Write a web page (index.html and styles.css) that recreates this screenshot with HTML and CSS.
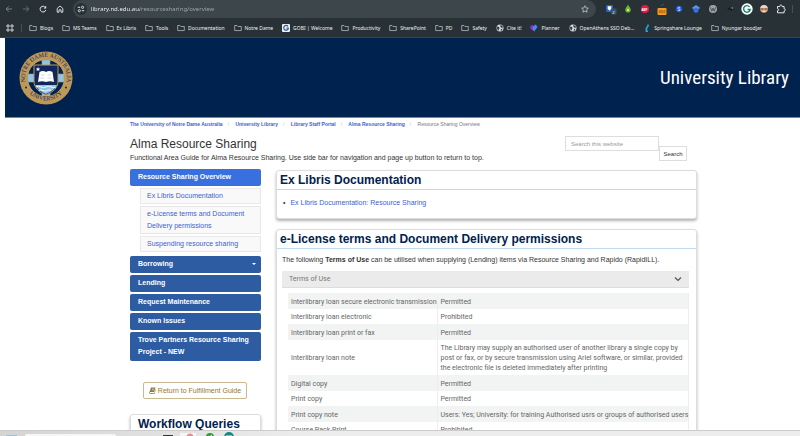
FILE: index.html
```html
<!DOCTYPE html>
<html lang="en">
<head>
    <meta charset="UTF-8">
    <meta name="viewport" content="width=device-width, initial-scale=1.0">
    <title>Resource Sharing Overview - Alma Resource Sharing</title>
    <link rel="stylesheet" href="styles.css">
</head>
<body>
    <!-- shared symbols -->
    <svg class="defs" width="0" height="0" aria-hidden="true">
        <symbol id="folder" viewBox="0 0 9 8"><path d="M.8 1.2h2.6l1 1.1h3.8v4.6H.8z" fill="none" stroke="#b4babd" stroke-width=".9" stroke-linejoin="round"/></symbol>
        <symbol id="globe" viewBox="0 0 8 8"><circle cx="4" cy="4" r="3.5" fill="#d5d9db"/><path d="M1 2.6l2 .4.7 1.3-1 .7.3 1.8L1.2 5.3zM4.3.9l2 .9.8 1.6-1.7.4-1-1zM5 5l1.5-.2-.8 1.7-1 .4z" fill="#30393d"/></symbol>
    </svg>

    <header class="browser">
        <div class="toolbar">
            <button class="tool" aria-label="Back"><svg viewBox="0 0 8 8"><path d="M7 4H1.3M3.8 1.3L1.2 4l2.6 2.7" fill="none" stroke="#8b9396" stroke-width=".8"/></svg></button>
            <button class="tool" aria-label="Forward"><svg viewBox="0 0 8 8"><path d="M1 4h5.7M4.2 1.3L6.8 4 4.2 6.7" fill="none" stroke="#737b7f" stroke-width=".8"/></svg></button>
            <button class="tool" aria-label="Reload"><svg viewBox="0 0 8 8"><path d="M6.5 2.6A2.9 2.9 0 1 0 6.8 5" fill="none" stroke="#e6e9ea" stroke-width="1"/><path d="M7.2.8v2.6H4.6z" fill="#e6e9ea"/></svg></button>
            <button class="tool" aria-label="Home"><svg viewBox="0 0 8 8"><path d="M1.2 3.4L4 1l2.8 2.4v3.8H5V4.8H3v2.4H1.2z" fill="none" stroke="#e6e9ea" stroke-width=".9"/></svg></button>
            <div class="address">
                <button class="site-info" aria-label="Site information"><svg viewBox="0 0 8 8"><path d="M.8 2.3h2.4M4.8 5.7h2.4" stroke="#dfe3e4" stroke-width="1"/><circle cx="5.6" cy="2.3" r="1.1" fill="none" stroke="#dfe3e4" stroke-width=".9"/><circle cx="2.3" cy="5.7" r="1.1" fill="none" stroke="#dfe3e4" stroke-width=".9"/></svg></button>
                <input class="url" type="text" aria-label="Address" value="library.nd.edu.au/resourcesharing/overview">
                <button class="tool" aria-label="Bookmark this page"><svg viewBox="0 0 8 8"><path d="M4 .7l1 2.2 2.4.3-1.8 1.6.5 2.4L4 6l-2.1 1.2.5-2.4L.6 3.2 3 2.9z" fill="none" stroke="#d4d8da" stroke-width=".7"/></svg></button>
            </div>
            <div class="extensions">
                <button class="ext" aria-label="Password manager"><svg viewBox="0 0 12 12"><rect x="1" y="2" width="7" height="7" rx="1" fill="#2463d4"/><path d="M2.7 3.3h3.6v2.5L4.5 7.8 2.7 5.8z" fill="#fff"/><rect x="6" y="5.5" width="5.5" height="6" rx="1" fill="#33566b"/><text x="7.3" y="10.5" class="badge-text">2</text></svg></button>
                <button class="ext" aria-label="Drop"><svg viewBox="0 0 12 12"><path d="M6 1.5c1 2 2.8 3.5 2.8 5.3A2.8 2.8 0 0 1 3.2 6.8C3.2 5 5.2 3.5 6 1.5z" fill="#6bb52d"/><circle cx="6" cy="7" r="1.2" fill="#c5ec96"/></svg></button>
                <button class="ext" aria-label="Ad blocker"><svg viewBox="0 0 12 12"><path d="M4.3 2h3.4L10 4.3v3.4L7.7 10H4.3L2 7.7V4.3z" fill="#e4173e"/><text x="2.4" y="7.6" class="badge-text bold">ABP</text></svg></button>
                <button class="ext" aria-label="Counter"><svg viewBox="0 0 12 12"><path d="M5 3l3-2" stroke="#315a72" stroke-width="1"/><rect x="1.5" y="5" width="9" height="7" rx="1" fill="#f29a22"/><text x="2.6" y="10.2" class="badge-text dark">302</text></svg></button>
                <button class="ext" aria-label="Scholar"><svg viewBox="0 0 12 12"><circle cx="6" cy="6" r="3.3" fill="#1655d8"/><path d="M7.3 4.7c-1-.8-2.6-.4-2.5.5s2.5.6 2.5 1.6-1.8 1.2-2.7.4" fill="none" stroke="#fff" stroke-width=".8"/></svg></button>
                <button class="ext" aria-label="Scholar button"><svg viewBox="0 0 12 12"><path d="M6 2l4.3 3L6 7.5 1.7 5z" fill="#5b94ef"/><circle cx="6" cy="7.3" r="2.5" fill="#3a70d8"/></svg></button>
                <button class="ext" aria-label="Wiki"><svg viewBox="0 0 12 12"><circle cx="6" cy="6" r="4" fill="#a0a3a4"/><path d="M3.3 4.2l1.5 4L6 5l1.2 3.2 1.5-4" fill="none" stroke="#4b4f50" stroke-width=".9"/></svg></button>
                <button class="ext" aria-label="Cursor"><svg viewBox="0 0 12 12"><path d="M3 6l2-1.5L6 6l3-1-1 3-2-1z" fill="#151a1c"/><circle cx="8.3" cy="5" r=".8" fill="#b7a78d"/></svg></button>
                <button class="ext" aria-label="Writing assistant"><svg viewBox="0 0 12 12"><circle cx="6" cy="6" r="5.7" fill="#fff"/><path d="M8.6 3.9A3.3 3.3 0 1 0 9.2 6.5H6.5" fill="none" stroke="#14876b" stroke-width="1.4"/></svg></button>
                <button class="ext" aria-label="Profile helper"><svg viewBox="0 0 12 12"><circle cx="6" cy="6" r="3.8" fill="#d9a184"/><path d="M2.3 5c.2-4 7.2-4 7.4 0z" fill="#ead6c4"/><path d="M3.2 6h2.2M6.6 6h2.2" stroke="#593c35" stroke-width="1.2"/><path d="M4.5 8.3h3" stroke="#fff" stroke-width=".8"/></svg></button>
                <button class="ext" aria-label="Extensions"><svg viewBox="0 0 12 12"><path d="M2.5 3.5h2.3c-.3-2 2.6-2 2.3 0h2v2.3c1.7-.2 1.7 2.3 0 2v2H2.5V7.6c1.5.1 1.5-2 0-1.9z" fill="none" stroke="#e6e9ea" stroke-width="1"/></svg></button>
                <span class="divider"></span>
            </div>
        </div>
        <nav class="bookmarks" aria-label="Bookmarks">
            <button class="tool apps" aria-label="Apps"><svg viewBox="0 0 8 8"><path d="M1 1h2v2H1zM5 1h2v2H5zM1 5h2v2H1zM5 5h2v2H5z" fill="none" stroke="#eceff0" stroke-width=".8"/></svg></button>
            <span class="divider"></span>
            <div class="bookmark-list">
                <a href="#"><svg><use href="#folder"/></svg>Blogs</a>
                <a href="#"><svg><use href="#folder"/></svg>MS Teams</a>
                <a href="#"><svg><use href="#folder"/></svg>Ex Libris</a>
                <a href="#"><svg><use href="#folder"/></svg>Tools</a>
                <a href="#"><svg><use href="#folder"/></svg>Documentation</a>
                <a href="#"><svg><use href="#folder"/></svg>Notre Dame</a>
                <a href="#"><svg viewBox="0 0 8 8"><rect width="8" height="8" rx="1" fill="#eef2f5"/><path d="M6 2.3A2.4 2.4 0 1 0 6.2 5V4H4.3" fill="none" stroke="#27598d" stroke-width="1.2"/></svg>GOBI | Welcome</a>
                <a href="#"><svg><use href="#folder"/></svg>Productivity</a>
                <a href="#"><svg><use href="#folder"/></svg>SharePoint</a>
                <a href="#"><svg><use href="#folder"/></svg>PD</a>
                <a href="#"><svg><use href="#folder"/></svg>Safety</a>
                <a href="#"><svg><use href="#globe"/></svg>Cite it!</a>
                <a href="#"><svg viewBox="0 0 8 8"><path d="M.5 2l2-1 2 2-2 3.5-2-2z" fill="#8a36d6"/><path d="M4 1.5l1.7-1L7.5 3 4.2 7.5 2.5 5.5z" fill="#3c8df0"/><path d="M3 2.5l1.5 1.2L3 6z" fill="#d94fe0"/></svg>Planner</a>
                <a href="#"><svg><use href="#globe"/></svg>OpenAthens SSO Deb...</a>
                <a href="#"><svg viewBox="0 0 8 8"><path d="M5 .6v2M5 2.2C3.200 3.600 3 5.400 3.400 7.200H5" fill="none" stroke="#22a5e0" stroke-width="1.600"/></svg>Springshare Lounge</a>
                <a href="#"><svg><use href="#folder"/></svg>Nyungar boodjar</a>
            </div>
        </nav>
    </header>

    <div class="page">
        <div class="banner">
            <svg class="crest" viewBox="0 0 54 54" role="img" aria-label="Notre Dame Australia University">
                <circle cx="27" cy="27" r="26.5" fill="#bd9857"/>
                <circle cx="27" cy="27" r="18.5" fill="#00224f" stroke="#d6b77d" stroke-width=".7"/>
                <path d="M23 9h8v36h-8zM9 23h36v8H9z" fill="#8fc5ec" stroke="#bd9857" stroke-width=".6"/>
                <path d="M15 14h24v16c0 7-5 11-12 14-7-3-12-7-12-14z" fill="#14275c" stroke="#bd9857" stroke-width="1"/>
                <path d="M16 34h22c-2 4-6 7-11 9-5-2-9-5-11-9z" fill="#8fc5ec"/>
                <path d="M17 36q2.5-1.5 5 0t5 0 5 0 5 0M20 39.5q2-1.5 4 0t4 0 4 0" fill="none" stroke="#fff" stroke-width=".9"/>
                <path d="M19 31l1.5-10q3.5-2 6.5 0 3-2 6.5 0L35 31q-4-1.5-8 0-4-1.5-8 0z" fill="#fff"/>
                <path d="M22 24h3.5M21.5 27h4M28.5 24H32M28.5 27h4" stroke="#b4bac5" stroke-width=".6"/>
                <path d="M19 16l.6 1.4 1.5.1-1 1.1.3 1.5-1.4-.8-1.4.8.3-1.5-1-1.1 1.5-.1z" fill="#fff"/>
                <path id="ring-top" d="M10.8 40.2A21 21 0 1 1 43.2 40.2" fill="none"/>
                <path id="ring-bottom" d="M5.5 36A24 24 0 0 0 48.5 36" fill="none"/>
                <circle cx="7" cy="36.5" r=".9" fill="#00224f"/>
                <circle cx="47" cy="36.5" r=".9" fill="#00224f"/>
                <text class="crest-text"><textPath href="#ring-top" startOffset="50%" text-anchor="middle">NOTRE DAME AUSTRALIA</textPath></text>
                <text class="crest-text"><textPath href="#ring-bottom" startOffset="50%" text-anchor="middle">UNIVERSITY</textPath></text>
            </svg>
            <span class="banner-title">University Library</span>
        </div>

        <div class="container">
            <nav class="breadcrumb" aria-label="Breadcrumb">
                <a href="#">The University of Notre Dame Australia</a>
                <a href="#">University Library</a>
                <a href="#">Library Staff Portal</a>
                <a href="#">Alma Resource Sharing</a>
                <span>Resource Sharing Overview</span>
            </nav>

            <div class="guide-header">
                <div class="guide-info">
                    <h1>Alma Resource Sharing</h1>
                    <p>Functional Area Guide for Alma Resource Sharing. Use side bar for navigation and page up button to return to top.</p>
                </div>
                <form class="search">
                    <input type="text" aria-label="Search this website" placeholder="Search this website">
                    <button type="button">Search</button>
                </form>
            </div>

            <div class="columns">
                <aside class="sidebar">
                    <nav class="side-nav" aria-label="Guide pages">
                        <a class="active" href="#">Resource Sharing Overview</a>
                        <div class="sub-nav">
                            <a href="#">Ex Libris Documentation</a>
                            <a href="#">e-License terms and Document Delivery permissions</a>
                            <a href="#">Suspending resource sharing</a>
                        </div>
                        <a class="dropdown" href="#">Borrowing<span class="caret"></span></a>
                        <a href="#">Lending</a>
                        <a href="#">Request Maintenance</a>
                        <a href="#">Known Issues</a>
                        <a href="#">Trove Partners Resource Sharing Project - NEW</a>
                    </nav>
                    <a class="return-link" href="#"><svg viewBox="0 0 8 8"><path d="M2.3.7h5L5.9 5.8H1.5c-.7 0-.7 1 0 1h4.7L7.5 2l.4.4-1.4 5.2H1.3C.3 7.5 0 6.7.5 5.7z" fill="#93773b"/><path d="M3.4 2.2h2.7M3 3.4h2.7" stroke="#fff" stroke-width=".5"/></svg>Return to Fulfillment Guide</a>
                    <section class="box">
                        <h2 class="inset">Workflow Queries</h2>
                    </section>
                </aside>

                <main class="content">
                    <section class="box">
                        <h2>Ex Libris Documentation</h2>
                        <ul class="links">
                            <li><a href="#">Ex Libris Documentation: Resource Sharing</a></li>
                        </ul>
                    </section>
                    <section class="box">
                        <h2>e-License terms and Document Delivery permissions</h2>
                        <div class="box-body">
                            <p>The following <b>Terms of Use</b> can be utilised when supplying (Lending) items via Resource Sharing and Rapido (RapidILL).</p>
                            <button class="accordion" aria-expanded="true">Terms of Use<svg viewBox="0 0 8 8"><path d="M1 2.5l3 3 3-3" fill="none" stroke="#555" stroke-width="1.2"/></svg></button>
                            <table class="terms">
                                <tr><th>Interlibrary loan secure electronic transmission</th><td>Permitted</td></tr>
                                <tr><th>Interlibrary loan electronic</th><td>Prohibited</td></tr>
                                <tr><th>Interlibrary loan print or fax</th><td>Permitted</td></tr>
                                <tr><th>Interlibrary loan note</th><td>The Library may supply an authorised user of another library a single copy by post or fax, or by secure transmission using Ariel software, or similar, provided the electronic file is deleted immediately after printing</td></tr>
                                <tr><th>Digital copy</th><td>Permitted</td></tr>
                                <tr><th>Print copy</th><td>Permitted</td></tr>
                                <tr><th>Print copy note</th><td class="one-line">Users: Yes; University: for training Authorised usrs or groups of authorised users</td></tr>
                                <tr><th>Course Pack Print</th><td>Prohibited</td></tr>
                            </table>
                        </div>
                    </section>
                </main>
            </div>
        </div>
    </div>

    <footer class="taskbar">
        <span class="start"></span>
        <span class="task-search"></span>
        <svg class="task-icons" viewBox="0 0 180 6" aria-hidden="true">
            <path d="M13 5h5v1h-5z" fill="#fff"/>
            <path d="M31 5h3v1h-3z" fill="#6cb0e6"/>
            <path d="M47 4h10v2H47z" fill="#333"/>
            <rect x="64" y="2" width="16" height="4" fill="#f7f4f5"/>
            <circle cx="74" cy="6" r="3.5" fill="#e98c9c"/>
            <circle cx="94" cy="6" r="4" fill="#20a32a"/>
            <path d="M92 5l1.5 1L96 4" fill="none" stroke="#fff" stroke-width="1"/>
            <circle cx="113" cy="6" r="5" fill="#0d8d80"/>
            <path d="M110 5h6" stroke="#fff" stroke-width="1"/>
            <path d="M123 5h5v1h-5z" fill="#e2c27a"/>
            <path d="M142 5h9v1h-9z" fill="#fff"/>
        </svg>
    </footer>
</body>
</html>
```

FILE: styles.css
```css
* {
    box-sizing: border-box;
}
body {
    margin: 0;
    height: 100vh;
    display: flex;
    flex-direction: column;
    overflow: hidden;
    background: #fff;
    color: #333;
    font-family: "Liberation Sans", Arial, sans-serif;
    font-size: 7px;
    line-height: 12px;
}
.defs {
    position: absolute;
}
a {
    color: #3b62cf;
    text-decoration: none;
}
button, input {
    font: inherit;
    margin: 0;
    padding: 0;
    border: 0;
    background: none;
}
h1, h2, p, ul {
    margin: 0;
    padding: 0;
}

/* browser bar */
.browser {
    flex: none;
    background: #283136;
    font-family: "Noto Sans", sans-serif;
    border-bottom: 1px solid #3b4449;
}
.toolbar {
    display: flex;
    align-items: center;
    height: 18px;
    gap: 9px;
    padding-left: 5px;
}
.tool {
    flex: none;
    width: 8px;
    height: 8px;
    display: flex;
}
.tool svg {
    width: 8px;
    height: 8px;
}
.address {
    flex: 1;
    height: 18px;
    display: flex;
    align-items: center;
    gap: 4px;
    padding: 0 7px 0 2px;
    background: #3c464b;
    border-radius: 9px;
}
.site-info {
    width: 12px;
    height: 12px;
    padding: 2px;
    display: flex;
    border-radius: 50%;
    background: #283136;
}
/* host name bright, path dimmed */
.url {
    flex: 1;
    height: 14px;
    font-size: 6px;
    color: #eef0f1;
    background: linear-gradient(90deg, #fff 49px, #a5adb0 49px);
    -webkit-background-clip: text;
    background-clip: text;
    -webkit-text-fill-color: transparent;
}
.extensions {
    display: flex;
    align-items: center;
    gap: 5px;
    padding-right: 7px;
}
.ext {
    width: 12px;
    height: 12px;
    display: flex;
}
.ext svg {
    width: 12px;
    height: 12px;
}
.badge-text {
    font-size: 4px;
    fill: #fff;
}
.bold {
    font-weight: bold;
    font-size: 3px;
}
.dark {
    fill: #4b3108;
}
.divider {
    width: 1px;
    height: 8px;
    background: #465157;
}
.bookmarks {
    display: flex;
    align-items: center;
    height: 19px;
    padding: 0 38px 0 6px;
    gap: 7px;
}
.bookmark-list {
    flex: 1;
    display: flex;
    justify-content: space-between;
}
.bookmarks a {
    display: flex;
    align-items: center;
    gap: 3px;
    color: #f1f3f4;
    font-size: 5px;
    white-space: nowrap;
}
.bookmarks a svg {
    width: 8px;
    height: 8px;
}

/* page */
.page {
    flex: 1;
    min-height: 0;
    overflow: hidden;
    padding-left: 5px;
}
.banner {
    display: flex;
    align-items: center;
    justify-content: space-between;
    height: 80px;
    padding: 0 11px 0 14px;
    background: #00224f;
    border-bottom: 1px solid #7389a6;
}
.crest {
    width: 54px;
    height: 54px;
}
.crest-text {
    font-family: "Liberation Serif", serif;
    font-size: 6px;
    fill: #14275c;
}
.banner-title {
    color: #fff;
    font-family: "Liberation Sans Narrow", "Arial Narrow", "Roboto Condensed", sans-serif;
    font-size: 19px;
    line-height: 24px;
}
.container {
    padding: 0 103px 0 125px;
}
.breadcrumb {
    font-size: 5px;
    font-weight: bold;
    color: #777;
    white-space: nowrap;
}
.breadcrumb a:after {
    content: '/';
    padding: 0 5px;
    color: #bbb;
    font-weight: normal;
}
.breadcrumb span {
    font-weight: normal;
}
.guide-header {
    display: flex;
    justify-content: space-between;
    padding: 6px 10px 0 0;
    height: 39px;
}
.guide-info {
    white-space: nowrap;
}
h1 {
    font-size: 12px;
    line-height: 16px;
    font-weight: normal;
}
.search {
    display: flex;
    align-items: flex-start;
    font-size: 6px;
}
.search input {
    width: 94px;
    height: 15px;
    padding: 0 5px;
    border: 1px solid #ddd;
}
.search input::placeholder {
    color: #999;
}
.search button {
    width: 28px;
    height: 15px;
    margin-top: 10px;
    border: 1px solid #ddd;
    color: #333;
}
.columns {
    display: grid;
    grid-template-columns: 131px 1fr;
    gap: 15px;
}
.side-nav, .sub-nav {
    display: flex;
    flex-direction: column;
    gap: 2px;
}
.side-nav a {
    padding: 2px 8px 3px;
    border-radius: 2px;
    background: #2d5ca2;
    color: #fff;
    font-weight: bold;
}
.side-nav .active {
    background: #3871df;
}
.sub-nav {
    padding: 0 0 2px 10px;
}
.sub-nav a {
    padding: 1px 6px;
    border: 1px solid #e8e8e8;
    border-radius: 0;
    background: #f9f9f9;
    color: #3b62cf;
    font-weight: normal;
}
.side-nav .dropdown {
    display: flex;
    align-items: center;
    justify-content: space-between;
    padding-right: 5px;
}
.caret {
    border: 2px solid transparent;
    border-top-color: #fff;
    border-bottom: 0;
}
.return-link {
    display: flex;
    align-items: center;
    justify-content: center;
    gap: 2px;
    height: 17px;
    margin: 21px 14px 15px 13px;
    border: 1px solid #c9b98f;
    border-radius: 2px;
    color: #93773b;
    white-space: nowrap;
}
.return-link svg {
    width: 7px;
    height: 7px;
}
.box {
    border: 1px solid #ddd;
    border-radius: 3px;
    background: #fff;
    box-shadow: 0 2px 3px rgba(0, 0, 0, .3);
}
h2 {
    padding: 0 3px;
    border-bottom: 1px solid #bfd9ee;
    color: #00224f;
    font-size: 12px;
    line-height: 18px;
    white-space: nowrap;
}
.inset {
    padding: 0 7px;
    border-bottom: 0;
}
.content {
    display: flex;
    flex-direction: column;
    gap: 10px;
    min-width: 0;
    padding-top: 1px;
}
.links {
    padding: 7px 6px 9px;
    list-style: none;
}
.links li:before {
    content: '•';
    padding-right: 5px;
}
.box-body {
    padding: 5px 7px 5px 5px;
}
.accordion {
    display: flex;
    align-items: center;
    justify-content: space-between;
    width: 100%;
    height: 17px;
    margin: 5px 0;
    padding: 0 7px;
    background: #ebebeb;
    border-bottom: 1px solid #ddd;
    color: #777;
    font-family: Roboto, sans-serif;
}
.accordion svg {
    width: 8px;
    height: 8px;
}
.terms {
    width: calc(100% - 7px);
    margin-left: 6px;
    border-spacing: 0;
    font-family: Roboto, sans-serif;
    font-size: 7px;
    line-height: 10px;
    color: #666;
}
.terms th, .terms td {
    padding: 3px 0 2px 3px;
    border-right: 1px solid #eee;
    text-align: left;
    font-weight: normal;
}
.terms th {
    width: 1px;
    white-space: nowrap;
}
.terms .one-line {
    white-space: nowrap;
}
.terms tr:nth-child(odd) > * {
    border-top: 1px solid #f2f4f3;
    background: #f2f4f3;
}

/* taskbar */
.taskbar {
    flex: none;
    display: flex;
    height: 6px;
    background: linear-gradient(90deg, #d4d4d4, #ededed 40%);
    border-top: 1px solid #ccc;
}
.start {
    width: 11px;
    margin: 4px 8px 0 6px;
    background: #9bc5dd;
}
.task-search {
    width: 91px;
    margin-top: 3px;
    border-radius: 3px 3px 0 0;
    background: #f6f6f6;
}
.task-icons {
    width: 180px;
    height: 6px;
}
```
